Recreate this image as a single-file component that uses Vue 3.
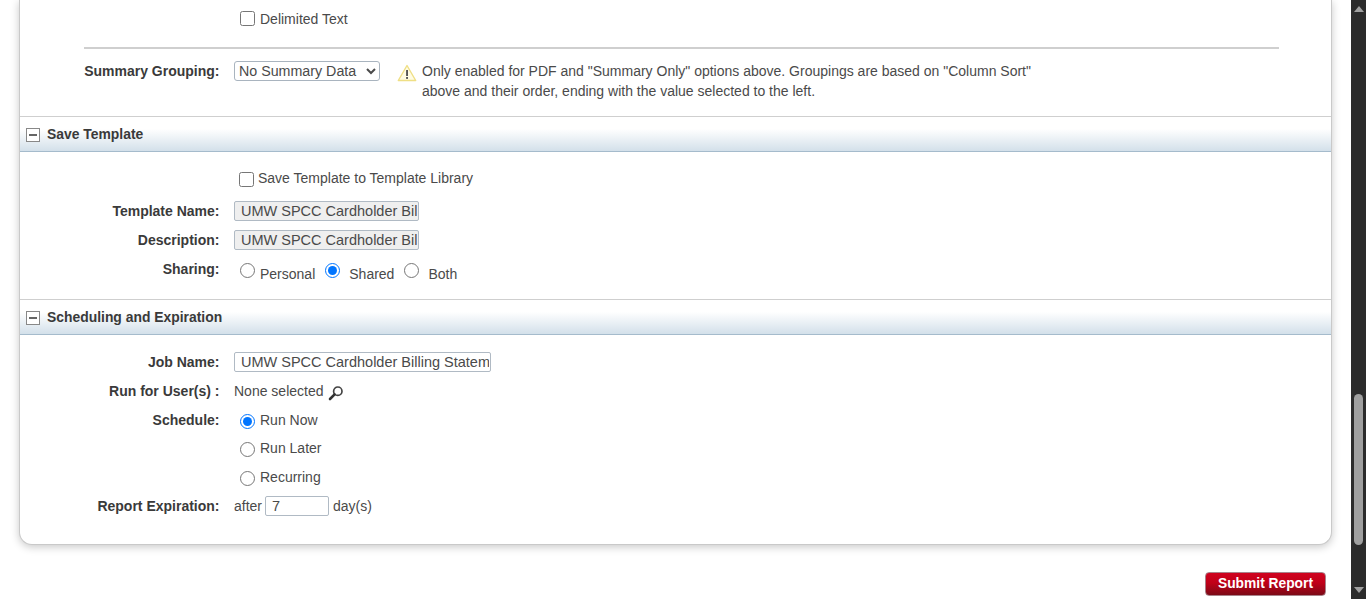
<template>
  <div class="page">
    <main class="content">
      <div class="card">
        <div class="form-row first">
          <span class="label"></span>
          <label class="check"><input type="checkbox" /> <span>Delimited Text</span></label>
        </div>
        <hr class="divider" />
        <div class="summary-row">
          <span class="label">Summary Grouping:</span>
          <select class="summary-select">
            <option>No Summary Data</option>
          </select>
          <svg class="warn-icon" width="20" height="18" viewBox="0 0 20 18">
            <path d="M10 1.5 L18.7 16.5 H1.3 Z" fill="#fffce4" stroke="#efdf85" stroke-width="1.4" stroke-linejoin="round" />
            <rect x="9.1" y="6" width="1.9" height="6" fill="#555" />
            <rect x="9.1" y="13" width="1.9" height="1.9" fill="#555" />
          </svg>
          <p class="note">Only enabled for PDF and "Summary Only" options above. Groupings are based on "Column Sort" above and their order, ending with the value selected to the left.</p>
        </div>

        <section v-for="section in sections" :key="section.title">
          <div class="section-head">
            <span class="toggle"></span>
            <h3>{{ section.title }}</h3>
          </div>

          <div v-if="section.title === 'Save Template'" class="section-body save-body">
            <div class="form-row save-check-row">
              <span class="label"></span>
              <label class="check tight"><input type="checkbox" /> <span>Save Template to Template Library</span></label>
            </div>
            <div class="form-row">
              <span class="label">Template Name:</span>
              <input class="text-input short" type="text" disabled value="UMW SPCC Cardholder Billing Statement" />
            </div>
            <div class="form-row">
              <span class="label">Description:</span>
              <input class="text-input short" type="text" disabled value="UMW SPCC Cardholder Billing Statement" />
            </div>
            <div class="form-row">
              <span class="label">Sharing:</span>
              <div class="sharing">
                <label v-for="opt in sharingOptions" :key="opt" class="share-opt">
                  <input v-model="sharing" type="radio" name="sharing" :value="opt" />
                  <span>{{ opt }}</span>
                </label>
              </div>
            </div>
          </div>

          <div v-else class="section-body sched-body">
            <div class="form-row">
              <span class="label">Job Name:</span>
              <input class="text-input long" type="text" value="UMW SPCC Cardholder Billing Statement" />
            </div>
            <div class="form-row">
              <span class="label">Run for User(s) :</span>
              <span class="plain">None selected</span>
              <svg class="search-icon" width="16" height="16" viewBox="0 0 16 16">
                <circle cx="9.8" cy="6.2" r="4.2" fill="#fff" stroke="#444" stroke-width="1.7" />
                <path d="M6.6 9.4 L2 14" stroke="#333" stroke-width="2.6" stroke-linecap="round" />
              </svg>
            </div>
            <div v-for="(opt, i) in scheduleOptions" :key="opt" class="form-row" :class="{ 'run-later': i === 1 }">
              <span class="label">{{ i === 0 ? 'Schedule:' : '' }}</span>
              <label class="check sched"><input v-model="schedule" type="radio" name="schedule" :value="opt" /> <span>{{ opt }}</span></label>
            </div>
            <div class="form-row">
              <span class="label">Report Expiration:</span>
              <span class="plain">after</span>
              <input class="text-input days" type="text" value="7" />
              <span class="plain">day(s)</span>
            </div>
          </div>
        </section>
      </div>

      <div class="actions">
        <button class="submit-btn" type="button">Submit Report</button>
      </div>
    </main>

    <div class="scrollbar">
      <span class="arrow up"></span>
      <div class="track"><div class="thumb"></div></div>
      <span class="arrow down"></span>
    </div>
  </div>
</template>

<script setup>
import { ref } from 'vue';

const sections = [{ title: 'Save Template' }, { title: 'Scheduling and Expiration' }];
const sharingOptions = ['Personal', 'Shared', 'Both'];
const scheduleOptions = ['Run Now', 'Run Later', 'Recurring'];

const sharing = ref('Shared');
const schedule = ref('Run Now');
</script>

<style>
html,
body {
  margin: 0;
  height: 100%;
  overflow: hidden;
  background: #fff;
}
</style>

<style scoped>
.page {
  display: flex;
  height: 599px;
  font-family: "Liberation Sans", Arial, sans-serif;
  font-size: 14px;
  color: #4a4a4a;
}

.content {
  flex: 1;
  padding: 0 19px;
  min-width: 0;
}

.card {
  height: 545px;
  box-sizing: border-box;
  background: #fff;
  border: 1px solid #c9c9c9;
  border-top: none;
  border-radius: 0 0 13px 13px;
  box-shadow: 0 2px 8px rgba(0, 0, 0, 0.22);
}

.form-row {
  display: flex;
  align-items: center;
  height: 29px;
}

.form-row.first {
  padding-top: 4px;
}

.save-check-row {
  margin-bottom: 4px;
}

.run-later {
  height: 28px;
}

.label {
  width: 199.5px;
  flex-shrink: 0;
  margin-right: 14.5px;
  text-align: right;
  font-weight: bold;
  color: #3a3a3a;
}

.check {
  display: flex;
  align-items: center;
  margin-left: 6px;
}

.check input {
  width: 15px;
  height: 15px;
  margin: 0 5px 0 0;
}

.check.tight {
  margin-left: 5px;
}

.check.tight input {
  margin: 4px 4px 0 0;
}

.check.sched input {
  margin-top: 3px;
}

.divider {
  margin: 14px 52px 0 64px;
  border: none;
  height: 2px;
  background: #cfcfcf;
}

.summary-row {
  display: flex;
  align-items: flex-start;
  height: 67px;
  padding-top: 12px;
  box-sizing: border-box;
}

.summary-row .label {
  line-height: 20px;
}

.summary-select {
  width: 146px;
  height: 20px;
  padding: 0;
  font: inherit;
  font-size: 14.25px;
  color: #4a4a4a;
  background: #fff;
  border: 1px solid #a9b4bf;
  border-radius: 3px;
}

.warn-icon {
  margin: 3px 5px 0 17px;
  flex-shrink: 0;
}

.note {
  margin: 0;
  width: 625px;
  line-height: 20px;
}

.section-head {
  display: flex;
  align-items: center;
  height: 36px;
  box-sizing: border-box;
  padding-left: 6px;
  border-top: 1px solid #cfcfcf;
  border-bottom: 1px solid #a5bbcc;
  background: linear-gradient(to bottom, #fff 35%, #d3e0ea 100%);
}

.section-head h3 {
  margin: 0;
  font-size: 13.9px;
  font-weight: bold;
  color: #3a3a3a;
}

.toggle {
  position: relative;
  width: 12px;
  height: 12px;
  margin: 2px 7px 0 0;
  border: 1px solid #888;
  background: #fff;
}

.toggle::after {
  content: "";
  position: absolute;
  left: 2px;
  right: 2px;
  top: 5px;
  height: 2px;
  background: #666;
}

.save-body {
  height: 147px;
  padding-top: 11px;
  box-sizing: border-box;
}

.sched-body {
  padding-top: 12px;
}

.text-input {
  height: 20px;
  box-sizing: border-box;
  padding: 0 1px 0 6px;
  font: inherit;
  font-size: 14.5px;
  color: #4a4a4a;
  border: 1px solid #b0bac4;
  border-radius: 2px;
  background: #fff;
}

.text-input:disabled {
  background: #efefef;
  color: #4a4a4a;
}

.text-input.short {
  width: 185px;
}

.text-input.long {
  width: 257px;
}

.text-input.days {
  width: 64px;
  margin: 0 4px 0 3px;
}

.plain {
  white-space: nowrap;
}

.search-icon {
  margin: 4px 0 0 4px;
}

.sharing {
  display: flex;
  align-self: stretch;
  margin-left: 6px;
}

.share-opt {
  display: flex;
  align-items: flex-start;
  margin-right: 10px;
}

.share-opt input {
  width: 15px;
  height: 15px;
  margin: 9px 5px 0 0;
}

.share-opt span {
  margin-top: 12px;
}

.share-opt:not(:first-child) span {
  margin-left: 4px;
}

.actions {
  display: flex;
  justify-content: flex-end;
  padding: 27px 6px 0 0;
}

.submit-btn {
  width: 121px;
  height: 24px;
  padding: 0 0 2px;
  font: bold 13.8px "Liberation Sans", Arial, sans-serif;
  color: #fff;
  border: 1px solid #a8828a;
  border-radius: 4px;
  background: linear-gradient(to bottom, #d0021f 0%, #c00018 45%, #7c0a17 100%);
  cursor: pointer;
}

.scrollbar {
  width: 15px;
  flex-shrink: 0;
  display: flex;
  flex-direction: column;
  align-items: center;
  background: #2b2b2b;
}

.arrow {
  width: 0;
  height: 0;
  border-left: 5px solid transparent;
  border-right: 5px solid transparent;
}

.arrow.up {
  margin-top: 6px;
  border-bottom: 6px solid #a0a0a0;
}

.arrow.down {
  margin-bottom: 6px;
  border-top: 6px solid #a0a0a0;
}

.track {
  flex: 1;
  width: 100%;
  display: flex;
  justify-content: center;
  padding-top: 382px;
  box-sizing: border-box;
}

.thumb {
  width: 9px;
  height: 151px;
  border-radius: 5px;
  background: #9f9f9f;
}
</style>
